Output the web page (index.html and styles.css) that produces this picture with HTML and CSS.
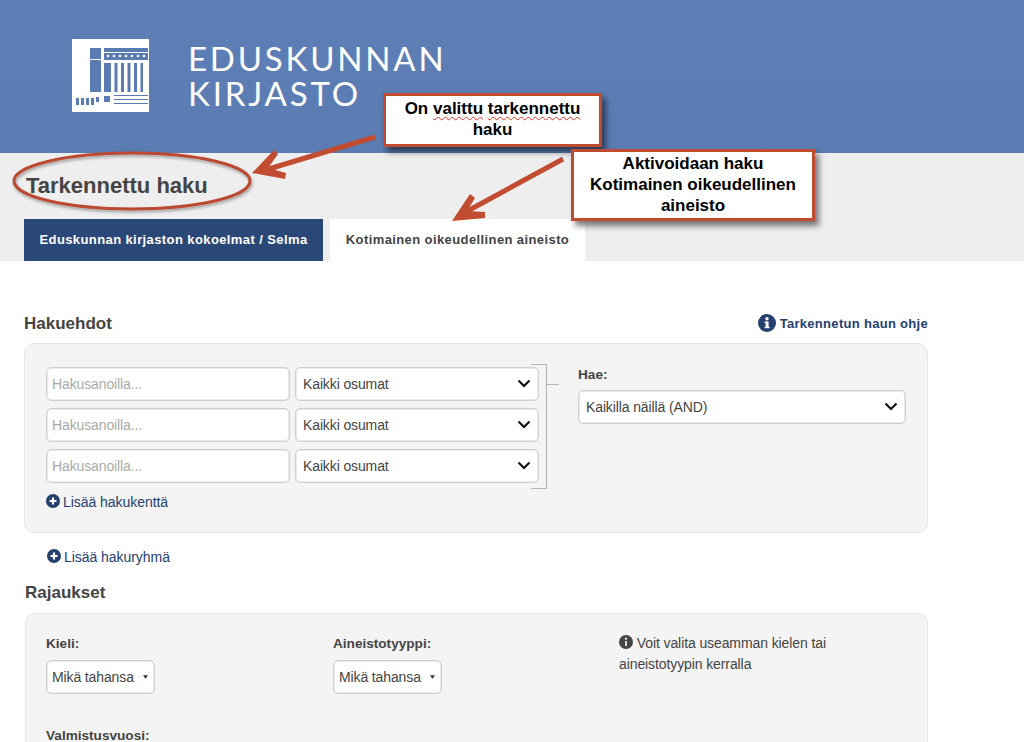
FILE: index.html
```html
<!DOCTYPE html>
<html lang="fi">
<head>
<meta charset="utf-8">
<title>Tarkennettu haku</title>
<link rel="stylesheet" href="styles.css">
</head>
<body>
<header class="site-header">
  <svg class="logo-mark" viewBox="0 0 77 73" aria-hidden="true">
    <rect width="77" height="73" fill="#fff"/>
    <g fill="#5a7cb2">
      <rect x="18" y="9" width="11" height="44"/>
      <rect x="32" y="9" width="44" height="4"/>
      <rect x="32" y="14" width="44" height="7"/>
      <rect x="32" y="24" width="44" height="29"/>
      <rect x="4" y="59" width="3" height="7"/><rect x="9" y="59" width="3" height="7"/><rect x="14" y="59" width="3" height="7"/><rect x="19" y="59" width="3" height="7"/><rect x="24" y="58" width="3" height="5"/>
      <rect x="32" y="57" width="6" height="6"/>
      <rect x="42" y="56" width="34" height="1"/><rect x="42" y="60" width="34" height="1"/><rect x="42" y="64" width="34" height="1"/>
    </g>
    <g fill="#fff">
      <rect x="39" y="24" width="3.5" height="29"/><rect x="45.500" y="24" width="3.500" height="29"/><rect x="52" y="24" width="3.500" height="29"/><rect x="58.500" y="24" width="3.500" height="29"/><rect x="65" y="24" width="3.500" height="29"/><rect x="71" y="24" width="5" height="29"/>
      <circle cx="36" cy="17" r="1.300"/><circle cx="42" cy="17" r="1.300"/><circle cx="48" cy="17" r="1.300"/><circle cx="54" cy="17" r="1.300"/><circle cx="60" cy="17" r="1.300"/><circle cx="66" cy="17" r="1.300"/><circle cx="72" cy="17" r="1.300"/>
      <rect x="17" y="20" width="14" height="1"/>
    </g>
  </svg>
  <div class="logo-text"><div>EDUSKUNNAN</div><div>KIRJASTO</div></div>
</header>

<section class="title-band">
  <h1 class="page-title">Tarkennettu haku</h1>
  <nav class="tabs">
    <a class="tab tab-dark">Eduskunnan kirjaston kokoelmat / Selma</a>
    <a class="tab tab-light">Kotimainen oikeudellinen aineisto</a>
  </nav>
</section>

<main class="content">
  <div class="section-head">
    <h2 class="section-title">Hakuehdot</h2>
    <a class="help-link">
      <svg class="help-icon" viewBox="0 0 18 18" aria-hidden="true"><circle cx="9" cy="9" r="9" fill="#25406f"/><rect x="7.600" y="7.500" width="3" height="6.500" fill="#fff"/><rect x="6.500" y="7.500" width="2" height="1.400" fill="#fff"/><rect x="6.500" y="12.800" width="5" height="1.400" fill="#fff"/><circle cx="9" cy="4.800" r="1.700" fill="#fff"/></svg>
      Tarkennetun haun ohje
    </a>
  </div>

  <div class="panel panel-search">
    <div class="search-left">
      <div class="rows">
        <div class="row">
          <input class="field" placeholder="Hakusanoilla...">
          <div class="select"><span>Kaikki osumat</span><svg class="chev" viewBox="0 0 14 9"><path d="M1.500 1.500 7 7l5.500-5.500" fill="none" stroke="#111" stroke-width="2.200"/></svg></div>
        </div>
        <div class="row">
          <input class="field" placeholder="Hakusanoilla...">
          <div class="select"><span>Kaikki osumat</span><svg class="chev" viewBox="0 0 14 9"><path d="M1.500 1.500 7 7l5.500-5.500" fill="none" stroke="#111" stroke-width="2.200"/></svg></div>
        </div>
        <div class="row">
          <input class="field" placeholder="Hakusanoilla...">
          <div class="select"><span>Kaikki osumat</span><svg class="chev" viewBox="0 0 14 9"><path d="M1.500 1.500 7 7l5.500-5.500" fill="none" stroke="#111" stroke-width="2.200"/></svg></div>
        </div>
        <div class="bracket"></div>
        <div class="bracket-tick"></div>
      </div>
      <a class="add-link add-field">
        <svg class="plus" viewBox="0 0 14 14"><circle cx="7" cy="7" r="7" fill="#25406f"/><path d="M7 3.500v7M3.500 7h7" stroke="#fff" stroke-width="2.200"/></svg>
        Lisää hakukenttä
      </a>
    </div>
    <div class="search-right">
      <div class="label">Hae:</div>
      <div class="select select-wide"><span>Kaikilla näillä (AND)</span><svg class="chev" viewBox="0 0 14 9"><path d="M1.500 1.500 7 7l5.500-5.500" fill="none" stroke="#111" stroke-width="2.200"/></svg></div>
    </div>
  </div>

  <a class="add-link add-group">
    <svg class="plus" viewBox="0 0 14 14"><circle cx="7" cy="7" r="7" fill="#25406f"/><path d="M7 3.500v7M3.500 7h7" stroke="#fff" stroke-width="2.200"/></svg>
    Lisää hakuryhmä
  </a>

  <h2 class="section-title section-limits">Rajaukset</h2>
  <div class="panel panel-limits">
    <div class="limit-grid">
      <div class="limit">
        <div class="label">Kieli:</div>
        <div class="select select-small"><span>Mikä tahansa</span><svg class="mini" viewBox="0 0 6 4"><path d="M0 0h6L3 4z" fill="#333"/></svg></div>
      </div>
      <div class="limit">
        <div class="label">Aineistotyyppi:</div>
        <div class="select select-small"><span>Mikä tahansa</span><svg class="mini" viewBox="0 0 6 4"><path d="M0 0h6L3 4z" fill="#333"/></svg></div>
      </div>
      <p class="hint">
        <svg class="hint-icon" viewBox="0 0 14 14"><circle cx="7" cy="7" r="7" fill="#444"/><rect x="6" y="6" width="2" height="5" fill="#ddd"/><circle cx="7" cy="3.800" r="1.200" fill="#ddd"/></svg>
        Voit valita useamman kielen tai aineistotyypin kerralla
      </p>
    </div>
    <div class="label label-year">Valmistusvuosi:</div>
  </div>
</main>

<svg class="annot-arrows" viewBox="0 0 1024 742" aria-hidden="true">
  <defs>
    <filter id="soft" x="-10%" y="-30%" width="120%" height="170%"><feDropShadow dx="1" dy="2" stdDeviation="1.500" flood-color="#000" flood-opacity=".35"/></filter>
  </defs>
  <ellipse cx="132" cy="181" rx="118" ry="28" fill="none" stroke="#bb4a32" stroke-width="3" filter="url(#soft)"/>
  <path d="M375 137 262 171" stroke="#c24c31" stroke-width="5" fill="none"/>
  <path d="M252 173 274 150l4 4-10 14 18 5-1 6z" fill="#c24c31"/>
  <path d="M563 159 462 214" stroke="#c24c31" stroke-width="5" fill="none"/>
  <path d="M452 221 470 194l5 4-8 13 18 1v6z" fill="#c24c31"/>
</svg>
<div class="callout callout-one">On <span class="spell">valittu</span> <span class="spell">tarkennettu</span> haku</div>
<div class="callout callout-two">Aktivoidaan haku Kotimainen oikeudellinen aineisto</div>
</body>
</html>
```
FILE: styles.css
```css
* { box-sizing: border-box; }
html, body { margin: 0; height: 742px; overflow: hidden; }
body { position: relative; background: #fff; color: #444; font-family: "Liberation Sans", Arial, sans-serif; font-size: 14px; }

.site-header {
  height: 153px;
  display: flex;
  align-items: flex-start;
  padding: 39px 0 0 72px;
  background: linear-gradient(180deg, #5e7fb6 0%, #5a7cb2 100%);
}
.logo-mark { width: 77px; height: 73px; flex: none; }
.logo-text {
  margin: 2px 0 0 39px;
  font-family: Lato, "Liberation Sans", sans-serif;
  font-weight: 400;
  font-size: 33px;
  line-height: 35px;
  letter-spacing: 2.800px;
  color: #fff;
}

.title-band { height: 108px; background: #eee; padding: 21px 0 0 24px; display: flex; flex-direction: column; }
.page-title { margin: 0 0 0 2px; font-size: 22px; line-height: 24px; font-weight: bold; color: #444; }
.tabs { margin-top: 21px; display: flex; gap: 7px; }
.tab { height: 42px; padding-bottom: 1px; display: flex; align-items: center; justify-content: center; font-size: 13px; font-weight: bold; letter-spacing: .4px; }
.tab-dark { width: 299px; background: #2a4877; color: #fff; }
.tab-light { width: 255px; background: #fff; color: #444; }

.content { width: 904px; margin-left: 24px; padding-top: 52px; }
.section-head { display: flex; justify-content: space-between; align-items: center; height: 22px; }
.section-title { margin: 0; font-size: 17px; line-height: 22px; font-weight: bold; color: #444; }
.help-link { display: flex; align-items: center; gap: 4px; padding-bottom: 2px; font-size: 13px; font-weight: bold; letter-spacing: .3px; color: #25406f; }
.help-icon { width: 18px; height: 18px; }

.panel { background: #f4f4f4; border: 1px solid #e6e6e6; border-radius: 10px; }
.panel-search { height: 190px; margin-top: 8px; padding: 23px 21px 0; display: flex; }
.search-left { width: 493px; flex: none; }
.search-right { margin-left: 39px; }

.rows { position: relative; display: flex; flex-direction: column; gap: 7px; width: 493px; }
.row { display: flex; gap: 5px; height: 34px; }
.field, .select {
  height: 100%;
  background: #fff;
  border: 1px solid #d0d0d0;
  border-radius: 5px;
  box-shadow: inset 0 0 0 1px #eaeaea;
  font: 14px "Liberation Sans", Arial, sans-serif;
  letter-spacing: -.12px;
  color: #444;
}
.field { width: 244px; padding: 0 5px; outline: none; }
.field::placeholder { color: #aaa; opacity: 1; }
.select { width: 244px; display: flex; align-items: center; justify-content: space-between; padding: 0 8px 0 7px; }
.chev { width: 14px; height: 9px; flex: none; margin-right: -1px; margin-top: -2px; }
.bracket { position: absolute; left: 485px; top: -3px; width: 16px; height: 125px; border: 1px solid #b5b5b5; border-left: 0; }
.bracket-tick { position: absolute; left: 501px; top: 17px; width: 12px; height: 1px; background: #b5b5b5; }

.add-link { display: flex; align-items: center; gap: 3px; font-size: 14px; line-height: 16px; letter-spacing: -.05px; color: #25406f; }
.plus { width: 14px; height: 14px; flex: none; position: relative; top: -1px; }
.add-field { margin-top: 11px; }
.add-group { margin: 16px 0 0 23px; }

.label { font-size: 13.600px; line-height: 16px; font-weight: bold; color: #444; }
.select-wide { width: 328px; height: 34px; margin-top: 7px; }

.section-limits { margin: 17px 0 0 1px; }
.panel-limits { height: 200px; margin: 9px 0 0 1px; padding: 22px 20px 0; }
.limit-grid { display: grid; grid-template-columns: 287px 286px 1fr; }
.select-small { width: 109px; height: 34px; margin-top: 8px; padding: 0 6px 0 5px; }
.mini { width: 5px; height: 4px; flex: none; }
.hint { margin: -3px 0 0; width: 225px; font-size: 14px; line-height: 21px; letter-spacing: -.1px; color: #444; }
.hint-icon { width: 14px; height: 14px; vertical-align: -1px; }
.label-year { margin-top: 34px; }

.annot-arrows { position: absolute; left: 0; top: 0; width: 1024px; height: 742px; pointer-events: none; }
.callout {
  position: absolute;
  background: #fff;
  border: 3px solid #bf4b30;
  box-shadow: 4px 5px 6px rgba(0, 0, 0, .5);
  font-size: 17px;
  line-height: 21px;
  font-weight: bold;
  color: #000;
  text-align: center;
}
.callout-one { left: 383px; top: 93px; width: 219px; height: 54px; padding: 2px 15px 0; }
.callout-two { left: 571px; top: 149px; width: 244px; height: 72px; padding: 1px 10px 0; }
.spell { text-decoration: underline wavy #e0302a 1px; text-underline-offset: 2px; }
```
